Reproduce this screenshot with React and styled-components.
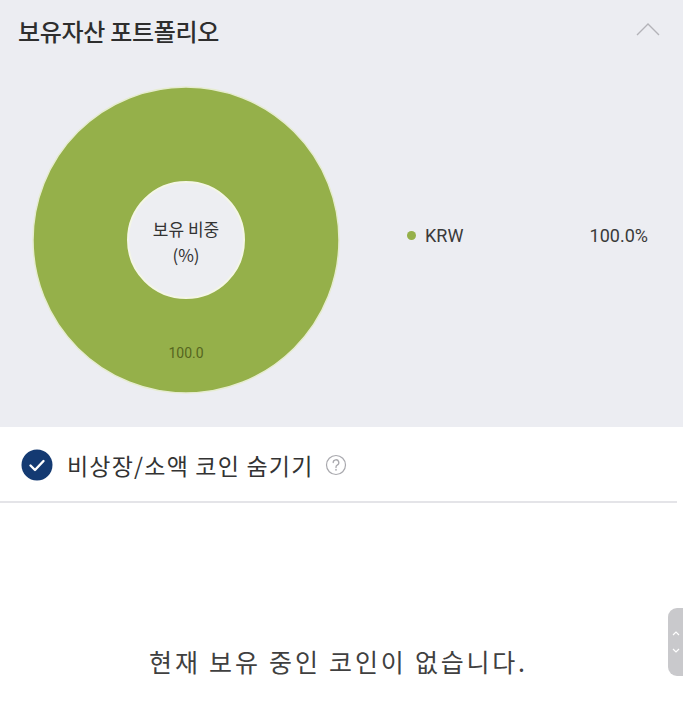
import React from "react";
import styled, { createGlobalStyle } from "styled-components";

const GlobalStyle = createGlobalStyle`
  html, body {
    margin: 0;
    padding: 0;
    background: #ffffff;
  }
  body {
    font-family: "Noto Sans CJK KR", "Noto Sans", sans-serif;
    color: #333;
  }
`;

const Page = styled.div`
  position: relative;
  width: 683px;
  height: 728px;
  overflow: hidden;
  background: #fff;
`;

const Portfolio = styled.section`
  background: #ecedf2;
  height: 427px;
  display: flex;
  flex-direction: column;
`;

const Header = styled.div`
  height: 62px;
  display: flex;
  align-items: center;
  justify-content: space-between;
  padding: 0 22px 0 18px;

  h2 {
    margin: 0;
    font-size: 24px;
    font-weight: 500;
    color: #2e2e2e;
    letter-spacing: -0.3px;
    padding-bottom: 2px;
  }
`;

const Chevron = styled.svg`
  width: 26px;
  height: 16px;
  margin-bottom: 4px;
`;

const ChartRow = styled.div`
  display: flex;
  align-items: center;
  padding: 23px 35px 0 31px;
  gap: 66px;
`;

const Donut = styled.svg`
  width: 310px;
  height: 310px;
  flex-shrink: 0;
`;

const Legend = styled.ul`
  list-style: none;
  margin: 0 0 10px;
  padding: 0;
  flex: 1;
`;

const LegendItem = styled.li`
  display: flex;
  align-items: center;
  font-family: Roboto, "Noto Sans", sans-serif;
  font-size: 18px;
  color: #3a3a3a;

  .dot {
    width: 9px;
    height: 9px;
    border-radius: 50%;
    background: ${(p) => p.color};
    margin-right: 9px;
  }

  .name {
    flex: 1;
  }
`;

const OptionRow = styled.label`
  height: 72px;
  display: flex;
  align-items: center;
  padding: 2px 0 0 21px;
  border-bottom: 2px solid #e4e4e8;
  margin-right: 6px;
  gap: 14px;
  cursor: pointer;

  span {
    font-size: 23px;
    letter-spacing: 1.2px;
    color: #333;
  }
`;

const Check = styled.svg`
  width: 32px;
  height: 32px;
`;

const Help = styled.svg`
  width: 22px;
  height: 22px;
  margin-left: -3px;
`;

const Empty = styled.div`
  height: 254px;
  display: flex;
  align-items: flex-end;
  justify-content: center;
  padding-bottom: 78px;
  box-sizing: border-box;

  p {
    margin: 0 6px 0 0;
    font-size: 25px;
    letter-spacing: 2.8px;
    color: #404040;
  }
`;

const ScrollTab = styled.div`
  position: absolute;
  right: 0;
  top: 608px;
  width: 15px;
  height: 68px;
  background: #c9c9cc;
  border-radius: 9px 0 0 9px;
  display: flex;
  flex-direction: column;
  align-items: center;
  justify-content: center;
  gap: 12px;
`;

const holdings = [{ name: "KRW", ratio: 100, color: "#95b04a" }];

export default function App() {
  return (
    <Page>
      <GlobalStyle />
      <Portfolio>
        <Header>
          <h2>보유자산 포트폴리오</h2>
          <Chevron viewBox="0 0 26 16">
            <polyline points="2,14 13,3 24,14" fill="none" stroke="#b3b3b8" strokeWidth="1.4" />
          </Chevron>
        </Header>
        <ChartRow>
          <Donut viewBox="0 0 310 310">
            <circle cx="155" cy="155" r="153" fill="#95b04a" stroke="#e6ecd0" strokeWidth="1.5" />
            <circle cx="155" cy="155" r="58" fill="#edeef2" stroke="#f4f6e6" strokeWidth="2" />
            <text x="155" y="151" textAnchor="middle" fontSize="17" fill="#333" fontFamily='"Noto Sans CJK KR", sans-serif'>
              보유 비중
            </text>
            <text x="155" y="177" textAnchor="middle" fontSize="17" fill="#333" fontFamily='"Noto Sans CJK KR", sans-serif'>
              (%)
            </text>
            <text x="155" y="273" textAnchor="middle" fontSize="14" fill="#56661f" fontFamily="Roboto, sans-serif">
              100.0
            </text>
          </Donut>
          <Legend>
            {holdings.map((h) => (
              <LegendItem key={h.name} color={h.color}>
                <i className="dot" />
                <span className="name">{h.name}</span>
                <span>{h.ratio.toFixed(1)}%</span>
              </LegendItem>
            ))}
          </Legend>
        </ChartRow>
      </Portfolio>

      <OptionRow>
        <Check viewBox="0 0 32 32">
          <circle cx="16" cy="16" r="15.5" fill="#143a72" />
          <polyline points="9.5,16.5 14,21 22.5,12" fill="none" stroke="#fff" strokeWidth="2.4" strokeLinecap="round" strokeLinejoin="round" />
        </Check>
        <span>비상장/소액 코인 숨기기</span>
        <Help viewBox="0 0 22 22">
          <circle cx="11" cy="11" r="9.5" fill="none" stroke="#a9a9ae" strokeWidth="1.2" />
          <path d="M8.2 8.6a2.8 2.8 0 1 1 4 2.5c-.8.4-1.2 1-1.2 1.8v.6" fill="none" stroke="#a9a9ae" strokeWidth="1.3" strokeLinecap="round" />
          <circle cx="11" cy="15.8" r="0.9" fill="#a9a9ae" />
        </Help>
      </OptionRow>

      <Empty>
        <p>현재 보유 중인 코인이 없습니다.</p>
      </Empty>

      <ScrollTab>
        <svg width="8" height="5" viewBox="0 0 8 5">
          <polyline points="1,4 4,1 7,4" fill="none" stroke="#fff" strokeWidth="1.2" />
        </svg>
        <svg width="8" height="5" viewBox="0 0 8 5">
          <polyline points="1,1 4,4 7,1" fill="none" stroke="#fff" strokeWidth="1.2" />
        </svg>
      </ScrollTab>
    </Page>
  );
}
